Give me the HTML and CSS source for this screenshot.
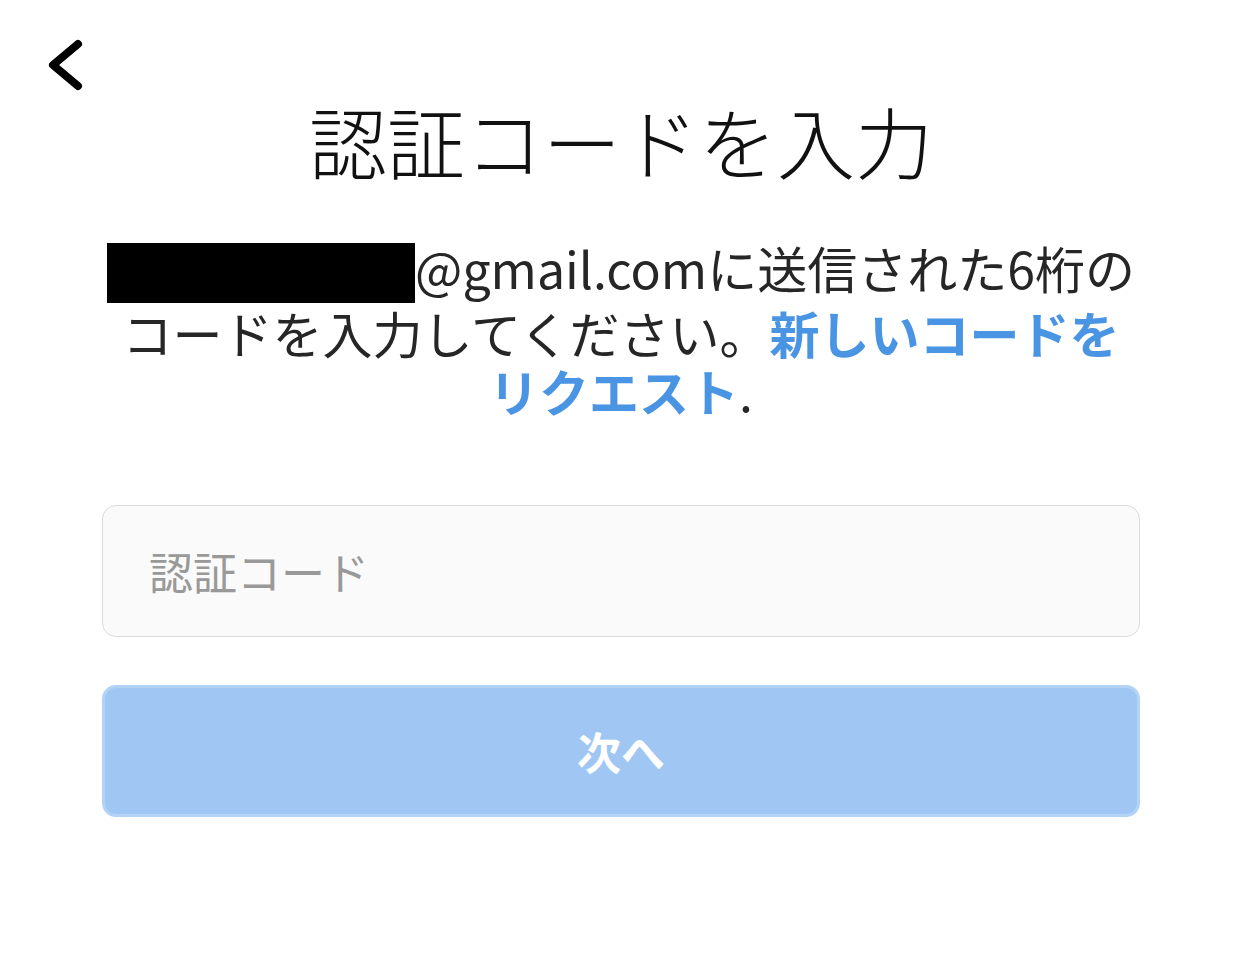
FILE: index.html
```html
<!DOCTYPE html>
<html lang="ja">
<head>
    <meta charset="UTF-8">
    <meta name="viewport" content="width=device-width, initial-scale=1.0">
    <title>認証コードを入力</title>
    <link rel="stylesheet" href="styles.css">
</head>
<body>
    <div class="topbar">
        <button class="back-btn" aria-label="戻る">
            <svg width="48" height="60" viewBox="0 0 48 60">
                <path d="M38 8 L13 29 L38 50" fill="none" stroke="#000" stroke-width="8" stroke-linecap="round" stroke-linejoin="round"/>
            </svg>
        </button>
    </div>

    <h1 class="title">認証コードを入力</h1>

    <p class="message">
        <span class="redacted"></span>@gmail.comに送信された6桁のコードを入力してください。<a href="#" class="link">新しいコードを<span class="nowrap">リクエスト</span></a>.
    </p>

    <form class="form">
        <input type="text" class="input-code" placeholder="認証コード">
        <button type="button" class="btn-next" disabled>次へ</button>
    </form>
</body>
</html>
```

FILE: styles.css
```css
body {
    margin: 0;
    padding: 0;
    background-color: #fff;
    color: #262626;
    font-family: "Noto Sans CJK JP", "Noto Sans", sans-serif;
}
.topbar {
    height: 92px;
    padding-left: 40px;
    box-sizing: border-box;
    padding-top: 36px;
}
.back-btn {
    background: none;
    border: none;
    padding: 0;
    margin: 0;
    display: block;
    cursor: pointer;
}
.back-btn svg {
    display: block;
}
.title {
    margin: 0;
    text-align: center;
    font-size: 78px;
    line-height: 96px;
    font-weight: 300;
    color: #111;
}
.message {
    margin: 50px auto 0;
    width: 1060px;
    text-align: center;
    font-size: 50px;
    line-height: 58px;
    font-weight: 400;
}
.redacted {
    display: inline-block;
    width: 308px;
    height: 60px;
    margin-top: -6px;
    background-color: #000;
    vertical-align: -14px;
}
.link {
    color: #4a94e4;
    font-weight: 700;
    text-decoration: none;
}
.nowrap {
    white-space: nowrap;
}
.form {
    margin: 86px 102px 0;
    display: flex;
    flex-direction: column;
    gap: 48px;
}
.input-code {
    height: 132px;
    box-sizing: border-box;
    border: 1.5px solid #dbdbdb;
    border-radius: 14px;
    background-color: #fafafa;
    padding: 0 46px;
    font-family: inherit;
    font-size: 44px;
    color: #262626;
    outline: none;
}
.input-code::placeholder {
    color: #999;
}
.btn-next {
    height: 132px;
    border: 3px solid #b3d3f6;
    border-radius: 14px;
    background-color: #a0c7f3;
    color: #fff;
    font-family: inherit;
    font-size: 44px;
    font-weight: 700;
    cursor: default;
}
```
